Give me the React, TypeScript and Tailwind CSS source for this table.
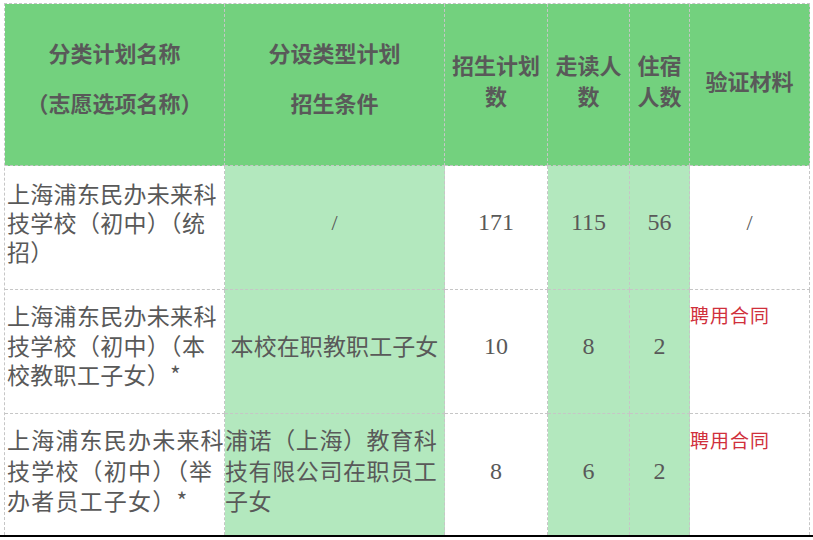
const cjk = "font-['Noto_Sans_CJK_SC',sans-serif]";
const serif = "font-['Liberation_Serif','Times_New_Roman',serif]";
const line = "border-r border-b border-dashed border-[#c6c6c6]";
const lineR = "border-r border-dashed border-[#c6c6c6]";

function Lines({ items }: { items: string[] }) {
  return (
    <div className="flex flex-col">
      {items.map((t, i) => (
        <span key={i} className="whitespace-nowrap">
          {t}
        </span>
      ))}
    </div>
  );
}

export default function App() {
  return (
    <div className="w-[813px] h-[540px] bg-white overflow-hidden">
      <div className="pt-[3px] pl-[4px]">
        <div className="grid grid-cols-[220px_220px_103px_82px_60px_120px] grid-rows-[162px_124px_124px_121px] w-[806px] border-l border-t border-dashed border-[#c6c6c6] text-[#595959]">
          {/* header */}
          <div className={`${line} ${cjk} bg-[#73d17e] flex flex-col items-center pt-[23px] leading-[50px] font-bold text-[22px]`}>
            <span>分类计划名称</span>
            <span>（志愿选项名称）</span>
          </div>
          <div className={`${line} ${cjk} bg-[#73d17e] flex flex-col items-center pt-[23px] leading-[50px] font-bold text-[22px]`}>
            <span>分设类型计划</span>
            <span>招生条件</span>
          </div>
          <div className={`${line} ${cjk} bg-[#73d17e] flex flex-col items-center justify-center pb-[9px] leading-[31px] font-bold text-[22px]`}>
            <span>招生计划</span>
            <span>数</span>
          </div>
          <div className={`${line} ${cjk} bg-[#73d17e] flex flex-col items-center justify-center pb-[9px] leading-[31px] font-bold text-[22px]`}>
            <span>走读人</span>
            <span>数</span>
          </div>
          <div className={`${line} ${cjk} bg-[#73d17e] flex flex-col items-center justify-center pb-[9px] leading-[31px] font-bold text-[22px]`}>
            <span>住宿</span>
            <span>人数</span>
          </div>
          <div className={`${line} ${cjk} bg-[#73d17e] flex flex-col items-center justify-center pb-[9px] leading-[31px] font-bold text-[22px]`}>
            <span>验证材料</span>
          </div>

          {/* row 1 */}
          <div className={`${line} ${cjk} bg-white flex items-center pl-[2px] pb-[10px] text-[23px] leading-[29px] tracking-[0.3px]`}>
            <Lines items={["上海浦东民办未来科", "技学校（初中）（统", "招）"]} />
          </div>
          <div className={`${line} ${serif} bg-[#b3e8be] flex items-center justify-center pb-[10px] text-[22px]`}>
            /
          </div>
          <div className={`${line} ${serif} bg-white flex items-center justify-center pb-[11px] text-[24px]`}>
            171
          </div>
          <div className={`${line} ${serif} bg-[#b3e8be] flex items-center justify-center pb-[11px] text-[24px]`}>
            115
          </div>
          <div className={`${line} ${serif} bg-[#b3e8be] flex items-center justify-center pb-[11px] text-[24px]`}>
            56
          </div>
          <div className={`${line} ${serif} bg-white flex items-center justify-center pb-[11px] text-[22px]`}>
            /
          </div>

          {/* row 2 */}
          <div className={`${line} ${cjk} bg-white flex items-center pl-[2px] pb-[12px] text-[23px] leading-[29.5px] tracking-[0.3px]`}>
            <Lines items={["上海浦东民办未来科", "技学校（初中）（本", "校教职工子女）*"]} />
          </div>
          <div className={`${line} ${cjk} bg-[#b3e8be] flex items-center justify-center pb-[12px] text-[23px] tracking-[0.1px]`}>
            本校在职教职工子女
          </div>
          <div className={`${line} ${serif} bg-white flex items-center justify-center pb-[12px] text-[24px]`}>
            10
          </div>
          <div className={`${line} ${serif} bg-[#b3e8be] flex items-center justify-center pb-[12px] text-[24px]`}>
            8
          </div>
          <div className={`${line} ${serif} bg-[#b3e8be] flex items-center justify-center pb-[12px] text-[24px]`}>
            2
          </div>
          <div className={`${line} ${cjk} bg-white pt-[15px] text-[19px] leading-[20px] tracking-[1px] text-[#d0303c]`}>
            聘用合同
          </div>

          {/* row 3 */}
          <div className={`${lineR} ${cjk} bg-white flex items-center pl-[2px] pb-[9px] text-[23px] leading-[30.5px] tracking-[1.2px]`}>
            <Lines items={["上海浦东民办未来科", "技学校（初中）（举", "办者员工子女）*"]} />
          </div>
          <div className={`${lineR} ${cjk} bg-[#b3e8be] flex items-center pb-[9px] text-[23px] leading-[30.5px] tracking-[0.6px]`}>
            <Lines items={["浦诺（上海）教育科", "技有限公司在职员工", "子女"]} />
          </div>
          <div className={`${lineR} ${serif} bg-white flex items-center justify-center pb-[8px] text-[24px]`}>
            8
          </div>
          <div className={`${lineR} ${serif} bg-[#b3e8be] flex items-center justify-center pb-[8px] text-[24px]`}>
            6
          </div>
          <div className={`${lineR} ${serif} bg-[#b3e8be] flex items-center justify-center pb-[8px] text-[24px]`}>
            2
          </div>
          <div className={`${lineR} ${cjk} bg-white pt-[16px] text-[19px] leading-[20px] tracking-[1px] text-[#d0303c]`}>
            聘用合同
          </div>
        </div>
      </div>
      <div className="h-[2px] bg-black w-full" />
    </div>
  );
}
